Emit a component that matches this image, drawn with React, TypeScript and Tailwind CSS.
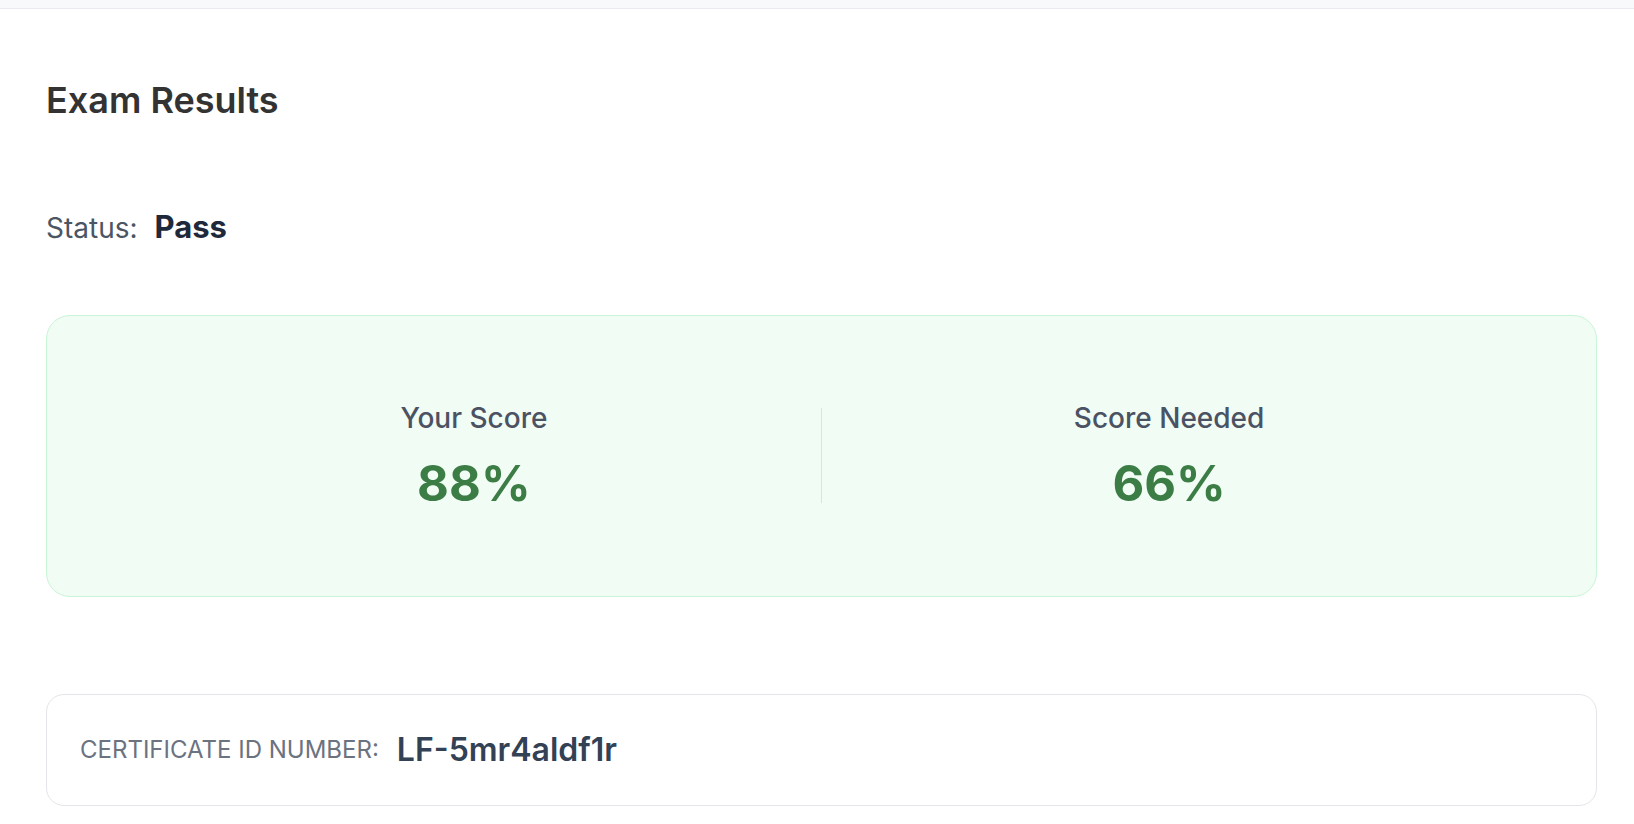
import React from "react"

interface ScoreItem {
  label: string
  value: string
}

const scores: ScoreItem[] = [
  { label: "Your Score", value: "88%" },
  { label: "Score Needed", value: "66%" },
]

function ScoreColumn({ item }: { item: ScoreItem }) {
  return (
    <div className="flex flex-1 flex-col items-center">
      <p className="text-[28px] font-medium leading-none text-[#4a5263]">{item.label}</p>
      <p className="mt-[27px] text-[49px] font-bold leading-none text-[#3c7d46]">{item.value}</p>
    </div>
  )
}

export default function App() {
  return (
    <div className="min-h-screen bg-white font-['Inter','Noto_Sans',sans-serif]">
      <div className="h-[8.5px] border-b-[1.5px] border-[#e8eaee] bg-[#f8f9fb]" />

      <div className="pl-[46px] pr-[37px] pt-[73px]">
        <h1 className="text-[36px] font-semibold leading-none text-[#333333]">Exam Results</h1>

        <div className="mt-[93px] flex items-baseline gap-[17px]">
          <span className="text-[28px] leading-none text-[#4b5563]">Status:</span>
          <span className="text-[31px] font-bold leading-none text-[#1e293b]">Pass</span>
        </div>

        <div className="mt-[73px] flex h-[282px] items-center rounded-[24px] border-[1.5px] border-[#c8f5d6] bg-[#f0fcf4] px-[80px]">
          <ScoreColumn item={scores[0]} />
          <div className="h-[95px] w-[1.5px] bg-[#dde1e6]" />
          <ScoreColumn item={scores[1]} />
        </div>

        <div className="mt-[97px] flex h-[112px] items-center gap-[18px] rounded-[18px] border-[1.5px] border-[#e3e5ea] px-[33px]">
          <span className="text-[24px] uppercase leading-none text-[#6b7280]">Certificate ID number:</span>
          <span className="text-[32px] font-semibold leading-none text-[#334155]">LF-5mr4aldf1r</span>
        </div>
      </div>
    </div>
  )
}
